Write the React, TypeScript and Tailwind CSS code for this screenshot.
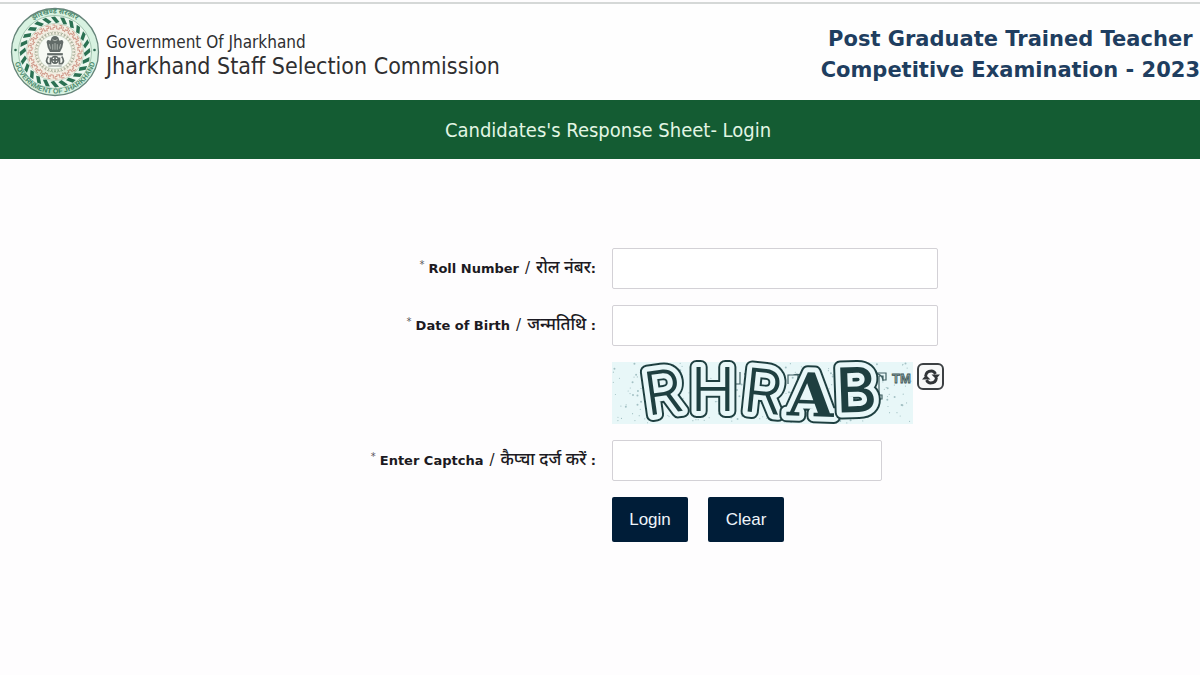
const elephants = Array.from({ length: 24 }, (_, i) => i * 15);
const flowers = Array.from({ length: 24 }, (_, i) => i * 15);
const dancers = Array.from({ length: 36 }, (_, i) => i * 10);

// speckles behind the captcha letters
const noise = (n: number) => Math.abs((Math.sin(n * 12.9898) * 43758.5453) % 1);
const specks = Array.from({ length: 260 }, (_, i) => ({
  x: 1 + noise(i + 1) * 298,
  y: 1 + noise(i + 501) * 60,
  r: i % 4 === 0 ? 1 : 0.6,
}));

const captchaLetters = [
  { char: "R", x: 54, y: 51, size: 60, rotate: -8, weight: 300, font: "Inter" },
  { char: "H", x: 101, y: 49, size: 60, rotate: 0, weight: 300, font: "Inter" },
  { char: "R", x: 149, y: 51, size: 61, rotate: 6, weight: 300, font: "Inter" },
  { char: "A", x: 198, y: 54, size: 60, rotate: 2, weight: 700, font: "DejaVu Serif" },
  { char: "B", x: 245, y: 50, size: 62, rotate: -2, weight: 500, font: "Inter" },
];

function Emblem() {
  return (
    <svg viewBox="0 0 90 90" className="size-[90px] shrink-0" role="img" aria-label="Emblem of Jharkhand">
      <defs>
        <path id="ring-top" d="M 6.5 45 A 38.5 38.5 0 0 1 83.5 45" />
        <path id="ring-bottom" d="M 3.5 45 A 41.5 41.5 0 0 0 86.5 45" />
      </defs>
      <circle cx="45" cy="45" r="43.5" fill="#d8f2e1" stroke="#66857a" strokeWidth="1.3" />
      <circle cx="45" cy="45" r="36.5" fill="#eef8f0" stroke="#8fb7a0" strokeWidth="0.8" />
      <text fontSize="7" fontWeight="700" fill="#4f8c70" fontFamily="'Noto Sans', 'Noto Sans Devanagari', sans-serif" textAnchor="middle">
        <textPath href="#ring-top" startOffset="50%">झारखण्ड सरकार</textPath>
      </text>
      <text fontSize="7" fontWeight="700" fill="#4f8c70" fontFamily="'Liberation Sans', sans-serif" textAnchor="middle">
        <textPath href="#ring-bottom" startOffset="50%">GOVERNMENT OF JHARKHAND</textPath>
      </text>
      <circle cx="5.5" cy="43" r="1.3" fill="#2c6650" />
      <circle cx="84.5" cy="43" r="1.3" fill="#2c6650" />
      {elephants.map((a) => (
        <path key={a} transform={`rotate(${a} 45 45)`} d="M41 10.3 L45 9.6 L49.5 15 L46 16.2 Z" fill="#2b7153" />
      ))}
      <circle cx="45" cy="45" r="28.5" fill="#f3eee2" stroke="#a9c3ac" strokeWidth="0.6" />
      {flowers.map((a) => (
        <path key={a} transform={`rotate(${a} 45 45)`} d="M42.5 18 H45 V20.5 H43 V23 M46.7 18.5 V22 H48.5" fill="none" stroke="#d0998a" strokeWidth="1" />
      ))}
      {dancers.map((a) => (
        <path key={a} transform={`rotate(${a} 45 45)`} d="M44 24.5 L45 26.5 L46 24.5 M45 26.5 V28" fill="none" stroke="#99a48c" strokeWidth="0.7" />
      ))}
      <circle cx="45" cy="45" r="17" fill="#f7faf4" stroke="#bccbb8" strokeWidth="0.7" />
      <g transform="translate(45 45) scale(1.12) translate(-45 -45)">
        <g fill="#626b68">
          <path d="M42 32 Q45 29.5 48 32 L49 35 Q52 33 52.5 36 L51.5 41 L49.5 45 H40.5 L38.5 41 L37.5 36 Q38 33 41 35 Z" />
          <path d="M38 46 H52 V48 H38 Z" />
        </g>
        <path d="M42.8 34 Q45 36 47.2 34 M43 38 V43 M45 37 V43 M47 38 V43 M40 38 L41 42 M50 38 L49 42" fill="none" stroke="#c1c8c2" strokeWidth="0.7" />
        <g fill="none" stroke="#626b68" strokeWidth="1.5">
          <circle cx="45" cy="52" r="3" />
          <path d="M45 49 V55 M42 52 H48 M39 49 Q36 53 39 55.5 H41 V50 M51 49 Q54 53 51 55.5 H49 V50" />
        </g>
        <path d="M39 57.5 H51" stroke="#8e9692" strokeWidth="1" />
      </g>
    </svg>
  );
}

function CaptchaImage() {
  return (
    <svg viewBox="0 0 301 62" className="h-[62px] w-[301px] shrink-0 overflow-visible" role="img" aria-label="Captcha">
      <rect width="301" height="62" fill="#e8f7f8" />
      {specks.map((s, i) => (
        <circle key={i} cx={s.x} cy={s.y} r={s.r} fill="#a3c1c4" />
      ))}
      {/* broken outline of the watermark */}
      <path
        d="M78 13 q8 -4 9 4 M80 20 h8 M118 10 v12 h10 v-12 M132 12 h8 v10 M158 13 l6 14 M166 13 l5 14 M176 22 v-9 h10 v6 M181 13 q10 -3 10 8 M223 11 h9 v8 M238 13 h6 M258 13 q12 -4 13 6 M262 11 h12 v7 h-3 v-4 h-4 v19 h3 v4 h-11 v-4 h3"
        fill="none"
        stroke="#3f5f62"
        strokeWidth="1.2"
      />
      {captchaLetters.map((l) => (
        <g
          key={l.x}
          transform={`rotate(${l.rotate} ${l.x} ${l.y})`}
          fontFamily={`'${l.font}', sans-serif`}
          fontSize={l.size}
          fontWeight={l.weight}
          strokeLinejoin="round"
          textAnchor="middle"
        >
          <text x={l.x} y={l.y} fill="#1e3f40" stroke="#1e3f40" strokeWidth="14">{l.char}</text>
          <text x={l.x} y={l.y} fill="#1e3f40" stroke="#e8f7f8" strokeWidth="10" className="[paint-order:stroke]" aria-hidden="true">{l.char}</text>
        </g>
      ))}
      <text x="280" y="21" fontSize="13" fontWeight="700" fill="#9db5b6" stroke="#3f5657" strokeWidth="0.8" fontFamily="'Liberation Sans', sans-serif">
        TM
      </text>
    </svg>
  );
}

function FieldLabel({ id, en, hi, gap = false }: { id: string; en: string; hi: string; gap?: boolean }) {
  return (
    <label htmlFor={id} className="self-center pb-px text-right font-['DejaVu_Sans','Noto_Sans',sans-serif] text-[13px] font-bold text-[#1c1a22]">
      <sup className="mr-1 text-[10px] font-normal text-[#5c5560]">*</sup>
      {en}
      <span className="px-1.5 text-[15px] font-normal">/</span>
      <span className="font-['Noto_Sans','Noto_Sans_Devanagari',sans-serif] text-[17px] leading-5 font-medium">{hi}</span>
      {gap ? " :" : ":"}
    </label>
  );
}

const inputClass = "h-[41px] rounded-xs border border-[#d3d1d6] bg-white px-3 text-base outline-none";
const buttonClass = "h-[45px] w-[76px] rounded-xs bg-[#001d38] font-['Liberation_Sans',sans-serif] text-[17px] text-[#eef4fa]";

export default function App() {
  return (
    <div className="min-h-screen overflow-x-hidden bg-[#fefdfe]">
      <header className="mt-0.5 flex h-[98px] items-center border-t-2 border-[#d5d8d7] bg-[#fefefe] pl-2.5">
        <Emblem />
        <div className="ml-1.5 grow pt-1 font-['DejaVu_Sans_Condensed','DejaVu_Sans',sans-serif] font-stretch-condensed text-[#2f2f31]">
          <p className="text-[17px] leading-6">Government Of Jharkhand</p>
          <p className="text-[23px] leading-6">Jharkhand Staff Selection Commission</p>
        </div>
        <h1 className="shrink-0 pt-1.5 text-center font-['DejaVu_Sans',sans-serif] text-[21px] leading-[31px] font-bold text-[#1f3e60]">
          Post Graduate Trained Teacher
          <br />
          Competitive Examination - 2023
        </h1>
      </header>

      <div className="flex h-[59px] items-center justify-center bg-[#145c33] pl-4">
        <h2 className="font-['DejaVu_Sans_Condensed','DejaVu_Sans',sans-serif] text-[20px] font-stretch-condensed text-[#e2f6e4]">Candidates's Response Sheet- Login</h2>
      </div>

      <form className="mt-[89px] grid grid-cols-2 gap-x-4 gap-y-4 pl-2" onSubmit={(e) => e.preventDefault()}>
        <FieldLabel id="roll" en="Roll Number" hi="रोल नंबर" />
        <input id="roll" type="text" className={`${inputClass} w-[326px]`} />

        <FieldLabel id="dob" en="Date of Birth" hi="जन्मतिथि" gap />
        <input id="dob" type="text" className={`${inputClass} w-[326px]`} />

        <div className="col-start-2 flex items-start gap-1">
          <CaptchaImage />
          <button
            type="button"
            aria-label="Refresh captcha"
            className="mt-px flex size-[27px] items-center justify-center rounded-md border-2 border-[#3c4043] bg-[#f7f8f8]"
          >
            <svg viewBox="0 0 20 20" className="size-5 shrink-0" fill="none" stroke="#303437" strokeWidth="2.8">
              <path d="M4.5 9.5 Q5 4 10.5 4 Q13 4 14.5 7" />
              <path d="M15.5 10.5 Q15 16 9.5 16 Q7 16 5.5 13" />
              <path d="M10.5 7.5 H19 L15 12 Z M1 12.5 H9.5 L5 8 Z" fill="#303437" stroke="none" />
            </svg>
          </button>
        </div>

        <FieldLabel id="captcha" en="Enter Captcha" hi="कैप्चा दर्ज करें" gap />
        <input id="captcha" type="text" className={`${inputClass} w-[270px]`} />

        <div className="col-start-2 flex gap-5">
          <button type="submit" className={buttonClass}>Login</button>
          <button type="reset" className={buttonClass}>Clear</button>
        </div>
      </form>
    </div>
  );
}
